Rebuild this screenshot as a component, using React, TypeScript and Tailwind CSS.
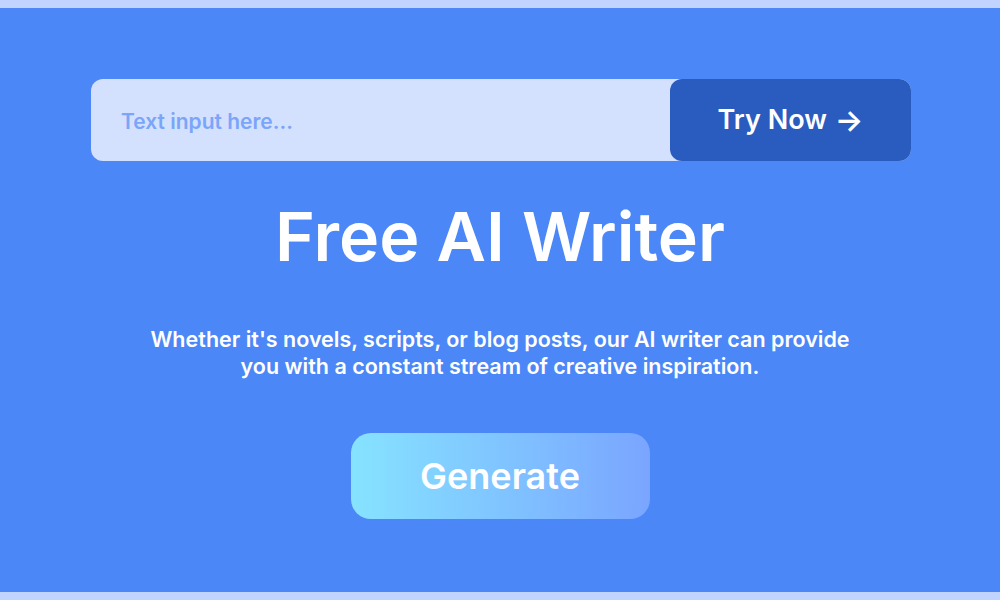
export default function App() {
  return (
    <div
      className="w-[1000px] h-[600px] bg-[#c1d4ff] py-[8px]"
      style={{ fontFamily: "Inter, 'Noto Sans', sans-serif" }}
    >
      <div className="h-full bg-[#4b87f6] flex flex-col items-center pt-[71px]">
        <div className="w-[820px] h-[82px] ml-[2px] flex rounded-[12px] bg-[#d3e1ff]">
          <div className="flex-1 flex items-center pl-[30px] pt-[3px] text-[21px] font-semibold text-[#7ba5f8]">
            Text input here...
          </div>
          <button className="w-[241px] h-full rounded-[12px] bg-[#2a5bbf] text-white text-[27px] font-semibold flex items-center justify-center gap-2">
            Try Now
            <span className="text-[30px] leading-none">→</span>
          </button>
        </div>
        <h1 className="mt-[41px] text-[68px] font-semibold text-white leading-none">
          Free AI Writer
        </h1>
        <p className="mt-[56px] w-[720px] text-center text-white text-[21.5px] font-semibold leading-[27px]">
          Whether it's novels, scripts, or blog posts, our AI writer can provide
          you with a constant stream of creative inspiration.
        </p>
        <button className="mt-[53px] w-[299px] h-[86px] rounded-[20px] bg-gradient-to-r from-[#86e3ff] to-[#7aa5ff] text-white text-[36px] font-semibold">
          Generate
        </button>
      </div>
    </div>
  );
}
